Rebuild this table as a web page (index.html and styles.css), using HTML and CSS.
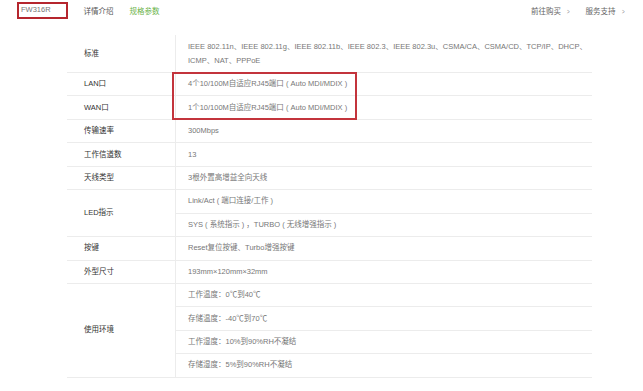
FILE: index.html
```html
<!DOCTYPE html>
<html lang="zh">
<head>
<meta charset="utf-8">
<link rel="stylesheet" href="styles.css">
</head>
<body>
<div class="nav">
  <div class="nav-left">
    <span class="model">FW316R</span>
    <span class="tab">详情介绍</span>
    <span class="tab active">规格参数</span>
  </div>
  <div class="nav-right">
    <span class="link">前往购买 <span class="chev">&gt;</span></span>
    <span class="link">服务支持 <span class="chev">&gt;</span></span>
  </div>
</div>
<div class="spec-wrap">
  <table class="spec">
    <tr class="tall">
      <td class="label">标准</td>
      <td class="value">IEEE 802.11n、IEEE 802.11g、IEEE 802.11b、IEEE 802.3、IEEE 802.3u、CSMA/CA、CSMA/CD、TCP/IP、DHCP、<br>ICMP、NAT、PPPoE</td>
    </tr>
    <tr><td class="label">LAN口</td><td class="value">4个10/100M自适应RJ45端口 ( Auto MDI/MDIX )</td></tr>
    <tr><td class="label">WAN口</td><td class="value">1个10/100M自适应RJ45端口 ( Auto MDI/MDIX )</td></tr>
    <tr><td class="label">传输速率</td><td class="value">300Mbps</td></tr>
    <tr><td class="label">工作信道数</td><td class="value">13</td></tr>
    <tr><td class="label">天线类型</td><td class="value">3根外置高增益全向天线</td></tr>
    <tr><td class="label" rowspan="2">LED指示</td><td class="value">Link/Act ( 端口连接/工作 )</td></tr>
    <tr><td class="value">SYS ( 系统指示 ) ，TURBO ( 无线增强指示 )</td></tr>
    <tr><td class="label">按键</td><td class="value">Reset复位按键、Turbo增强按键</td></tr>
    <tr><td class="label">外型尺寸</td><td class="value">193mm×120mm×32mm</td></tr>
    <tr><td class="label" rowspan="4">使用环境</td><td class="value">工作温度：0℃到40℃</td></tr>
    <tr><td class="value">存储温度：-40℃到70℃</td></tr>
    <tr><td class="value">工作湿度：10%到90%RH不凝结</td></tr>
    <tr><td class="value">存储湿度：5%到90%RH不凝结</td></tr>
  </table>
  <div class="highlight"></div>
</div>
</body>
</html>
```
FILE: styles.css
```css
html, body {
  margin: 0;
  padding: 0;
  background: #fff;
}
body {
  font-family: "Liberation Sans", "Noto Sans CJK SC", sans-serif;
  font-size: 7.5px;
  color: #666;
}
.nav {
  display: flex;
  justify-content: space-between;
  align-items: center;
  height: 20px;
  padding: 0 18px 0 17px;
}
.nav-left {
  display: flex;
  align-items: center;
  gap: 16px;
}
.model {
  border: 2px solid #b5262e;
  padding: 1px 15px 3px 2px;
  line-height: 9px;
  color: #777;
}
.tab {
  color: #555;
}
.tab.active {
  color: #6bb34a;
}
.nav-right {
  display: flex;
  gap: 15px;
}
.link {
  color: #666;
}
.chev {
  display: inline-block;
  margin-left: 3px;
  transform: scaleX(0.6);
  color: #888;
}
.spec-wrap {
  position: relative;
  margin: 15px 0 0 67px;
  width: 525px;
}
.spec {
  border-collapse: collapse;
  width: 525px;
}
.spec td {
  border-bottom: 1px solid #ececec;
  height: 22.45px;
  padding: 0;
  vertical-align: middle;
  line-height: 12px;
}
.spec .label {
  width: 91px;
  padding-left: 17px;
  color: #333;
  border-right: 1px solid #ececec;
}
.spec .value {
  padding-left: 12px;
  color: #777;
  white-space: nowrap;
}
.spec tr.tall td {
  height: 37px;
  line-height: 14px;
}
.highlight {
  position: absolute;
  left: 105px;
  top: 37px;
  width: 181px;
  height: 44px;
  border: 2px solid #c3343c;
}
```
